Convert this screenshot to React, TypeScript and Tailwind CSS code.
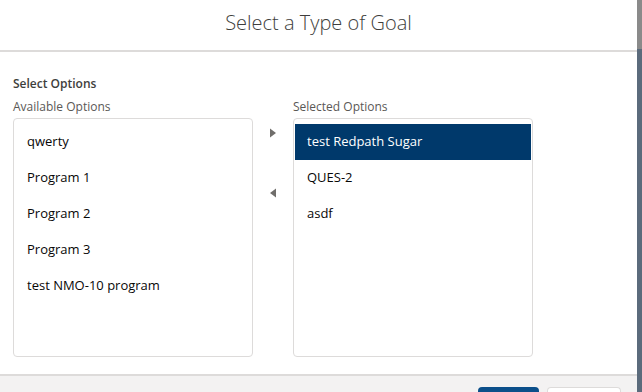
import { useState } from "react";

const AVAILABLE = ["qwerty", "Program 1", "Program 2", "Program 3", "test NMO-10 program"];
const SELECTED = ["test Redpath Sugar", "QUES-2", "asdf"];

function Caret({ dir }: { dir: "right" | "left" }) {
  return (
    <svg width="8" height="10" viewBox="0 0 8 10">
      {dir === "right" ? <path d="M1 0.5L7 5L1 9.5Z" fill="#706e6b" /> : <path d="M7 0.5L1 5L7 9.5Z" fill="#706e6b" />}
    </svg>
  );
}

function OptionList({ label, items, active }: { label: string; items: string[]; active?: number }) {
  return (
    <div className="flex flex-col w-[240px]">
      <span className="text-[12px] leading-[14px] text-[#5a5856] mb-[4px]">{label}</span>
      <ul className="h-[239px] border border-[#dddbda] rounded-[4px] bg-white pt-[5px] px-px">
        {items.map((it, i) => (
          <li
            key={it}
            className={`h-[36px] flex items-center px-[12px] text-[13px] ${
              i === active ? "bg-[#00396b] text-white" : "text-[#080707]"
            }`}
          >
            {it}
          </li>
        ))}
      </ul>
    </div>
  );
}

export default function App() {
  const [sel] = useState(0);
  return (
    <div className="flex w-[642px] h-[392px] overflow-hidden" style={{ fontFamily: "'Open Sans', 'Liberation Sans', sans-serif" }}>
      <div className="w-[637px] flex flex-col bg-white">
        {/* header */}
        <div className="h-[52px] shrink-0 flex items-center justify-center border-b-2 border-[#dddbda]">
          <h2 className="text-[20px] font-light text-[#3e3e3c] pb-[5px]">Select a Type of Goal</h2>
        </div>

        {/* body */}
        <div className="flex-1 px-[13px] pt-[25px]">
          <p className="text-[12px] font-semibold text-[#3e3e3c] leading-[14px] mb-[9px]">Select Options</p>
          <div className="flex">
            <OptionList label="Available Options" items={AVAILABLE} />
            <div className="w-[40px] flex flex-col items-center pt-[28px] gap-[50px]">
              <Caret dir="right" />
              <Caret dir="left" />
            </div>
            <OptionList label="Selected Options" items={SELECTED} active={sel} />
          </div>
        </div>

        {/* footer */}
        <div className="h-[18px] shrink-0 bg-[#f3f2f2] border-t-2 border-[#dddbda] flex justify-end items-end pr-[16px] gap-[8px]">
          <div className="w-[61px] h-[5px] bg-[#0b4f8a] rounded-t-[4px]" />
          <div className="w-[74px] h-[5px] bg-white border border-b-0 border-[#dddbda] rounded-t-[4px]" />
        </div>
      </div>

      {/* backdrop strip */}
      <div className="w-[5px] flex flex-col">
        <div className="h-[49px] bg-[#8a8a8a]" />
        <div className="flex-1 bg-[#5b6b7c]" />
      </div>
    </div>
  );
}
